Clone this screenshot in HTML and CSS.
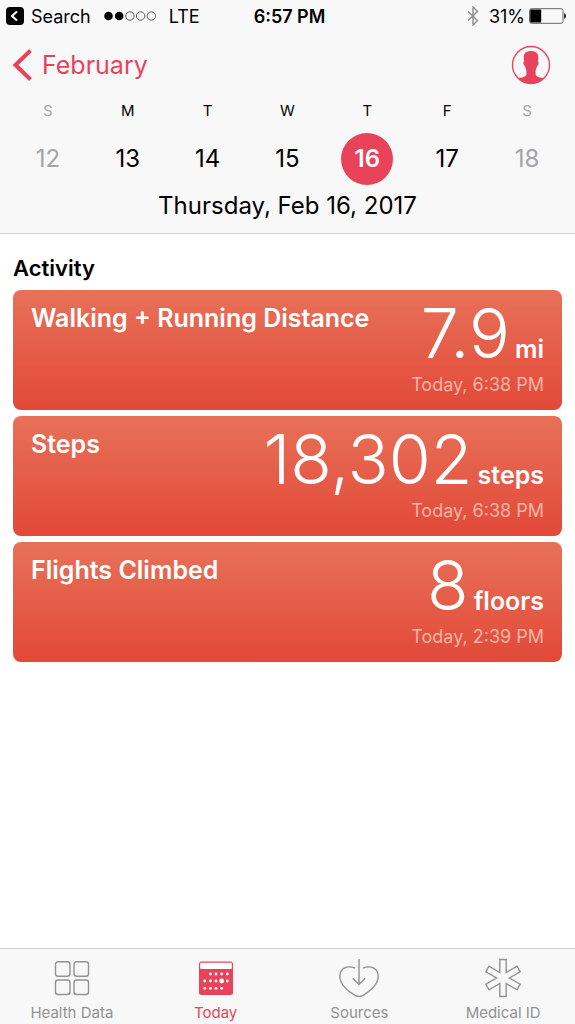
FILE: index.html
```html
<!DOCTYPE html>
<html lang="en">
<head>
    <meta charset="UTF-8">
    <meta name="viewport" content="width=device-width, initial-scale=1">
    <title>Health - Today</title>
    <link rel="stylesheet" href="styles.css">
</head>
<body>
    <header class="header">
        <div class="status-bar">
            <div class="status-left">
                <a href="#" class="back-app">
                    <svg width="18" height="18" viewBox="0 0 18 18" aria-hidden="true">
                        <rect width="18" height="18" rx="4" fill="#000"/>
                        <path d="M11 4.5L6 9l5 4.5" fill="none" stroke="#fff" stroke-width="2"/>
                    </svg>
                    Search
                </a>
                <svg class="signal" width="52" height="10" viewBox="0 0 52 10" role="img" aria-label="Signal 2 of 5">
                    <circle cx="4.5" cy="5" r="4.3"/>
                    <circle cx="15.2" cy="5" r="4.3"/>
                    <g fill="none" stroke="#333" stroke-width="0.8">
                        <circle cx="25.9" cy="5" r="4.2"/>
                        <circle cx="36.6" cy="5" r="4.2"/>
                        <circle cx="47.3" cy="5" r="4.2"/>
                    </g>
                </svg>
                <span>LTE</span>
            </div>
            <div class="clock">6:57 PM</div>
            <div class="status-right">
                <svg width="12" height="20" viewBox="0 0 12 20" aria-hidden="true">
                    <path d="M1 5.5l9.5 9L6 19V1l4.5 4.5L1 14.5" fill="none" stroke="#8e8e8e" stroke-width="1.4"/>
                </svg>
                <span class="percent">31%</span>
                <svg width="38" height="16" viewBox="0 0 38 16" aria-hidden="true">
                    <rect x="0.5" y="0.7" width="33.5" height="14.6" rx="2" fill="none" stroke="#555" stroke-width="0.9"/>
                    <rect x="1.2" y="1.5" width="11" height="13" rx="1"/>
                    <path d="M35.2 5q3.6 3 0 6z"/>
                </svg>
            </div>
        </div>

        <div class="nav-bar">
            <a href="#" class="back">
                <svg width="20" height="32" viewBox="0 0 20 32" aria-hidden="true">
                    <path d="M18.5 1.5L3.5 16l15 14.5" fill="none" stroke="currentColor" stroke-width="4"/>
                </svg>
                February
            </a>
            <button class="profile" aria-label="Profile">
                <svg width="40" height="40" viewBox="0 0 40 40">
                    <circle cx="20" cy="20" r="18.5" fill="none" stroke="currentColor" stroke-width="1.4"/>
                    <path d="M20 6C15 6 12.3 8.5 12.8 13.5L13.1 16.5C11.8 16.3 12.3 20.5 14 21C14.4 23.5 15.2 24.5 15.4 25.5V29.5C14.8 32 11 32.4 6.8 33.5C14 40.5 26 40.5 33.2 33.5C29 32.4 25.2 32 24.6 29.5V25.5C24.8 24.5 25.6 23.5 26 21C27.7 20.5 28.2 16.3 26.9 16.5L27.2 13.5C27.7 8.5 25 6 20 6Z" fill="currentColor"/>
                </svg>
            </button>
        </div>

        <div class="week">
            <button class="day weekend"><span class="letter">S</span><span class="number">12</span></button>
            <button class="day"><span class="letter">M</span><span class="number">13</span></button>
            <button class="day"><span class="letter">T</span><span class="number">14</span></button>
            <button class="day"><span class="letter">W</span><span class="number">15</span></button>
            <button class="day selected"><span class="letter">T</span><span class="number">16</span></button>
            <button class="day"><span class="letter">F</span><span class="number">17</span></button>
            <button class="day weekend"><span class="letter">S</span><span class="number">18</span></button>
        </div>
        <div class="date">Thursday, Feb 16, 2017</div>
    </header>

    <main class="content">
        <h1>Activity</h1>
        <a href="#" class="card">
            <h2>Walking + Running Distance</h2>
            <p class="value">7.9 <span class="unit">mi</span></p>
            <p class="time">Today, 6:38 PM</p>
        </a>
        <a href="#" class="card">
            <h2>Steps</h2>
            <p class="value">18,302 <span class="unit">steps</span></p>
            <p class="time">Today, 6:38 PM</p>
        </a>
        <a href="#" class="card">
            <h2>Flights Climbed</h2>
            <p class="value">8 <span class="unit">floors</span></p>
            <p class="time">Today, 2:39 PM</p>
        </a>
    </main>

    <nav class="tab-bar">
        <a href="#" class="tab">
            <svg width="40" height="40" viewBox="0 0 40 40" fill="none" stroke="currentColor" stroke-width="1.4" aria-hidden="true">
                <rect x="3.5" y="3.7" width="14.5" height="14.5" rx="2.5"/>
                <rect x="22" y="3.7" width="14.5" height="14.5" rx="2.5"/>
                <rect x="3.5" y="22" width="14.5" height="14.5" rx="2.5"/>
                <rect x="22" y="22" width="14.5" height="14.5" rx="2.5"/>
            </svg>
            Health Data
        </a>
        <a href="#" class="tab active">
            <svg width="40" height="40" viewBox="0 0 40 40" aria-hidden="true">
                <rect x="3" y="3.5" width="34" height="33.5" rx="2.5" fill="currentColor"/>
                <rect x="4.2" y="4.7" width="31.6" height="6.3" rx="1" fill="#fff"/>
                <g fill="#fff">
                    <circle cx="14.5" cy="16" r="1.4"/>
                    <circle cx="20" cy="16" r="1.4"/>
                    <circle cx="25.7" cy="16" r="1.4"/>
                    <circle cx="31.3" cy="16" r="1.4"/>
                    <circle cx="8.8" cy="23" r="1.4"/>
                    <circle cx="14.5" cy="23" r="1.4"/>
                    <circle cx="20" cy="23" r="1.4"/>
                    <circle cx="25.7" cy="23" r="2.4"/>
                    <circle cx="31.3" cy="23" r="1.4"/>
                    <circle cx="8.8" cy="30.3" r="1.4"/>
                    <circle cx="14.5" cy="30.3" r="1.4"/>
                    <circle cx="20" cy="30.3" r="1.4"/>
                    <circle cx="25.7" cy="30.3" r="1.4"/>
                </g>
            </svg>
            Today
        </a>
        <a href="#" class="tab">
            <svg width="40" height="40" viewBox="0 0 40 40" fill="none" stroke="currentColor" stroke-width="1.4" aria-hidden="true">
                <path d="M16 10.2C9 7 .8 10 .8 18.5C.8 27 10 34 16 37.3Q20 39.5 24 37.3C30 34 39.2 27 39.2 18.5C39.2 10 31 7 24 10.2"/>
                <path d="M20 1v25.5M13.8 20.2L20 26.500l6.2-6.3"/>
            </svg>
            Sources
        </a>
        <a href="#" class="tab">
            <svg width="40" height="40" viewBox="0 0 40 40" fill="none" stroke="currentColor" stroke-width="1.4" aria-hidden="true">
                <path d="M16.8 1.5H23.2V14.5L34 8.2L37.2 13.8L26.4 20L37.2 26.2L34 31.8L23.2 25.5V38.5H16.8V25.5L6 31.8L2.8 26.2L13.6 20L2.8 13.8L6 8.2L16.8 14.5Z"/>
            </svg>
            Medical ID
        </a>
    </nav>
</body>
</html>
```
FILE: styles.css
```css
* {
    box-sizing: border-box;
}
body {
    margin: 0;
    min-height: 100vh;
    display: flex;
    flex-direction: column;
    font-family: Inter, "Liberation Sans", sans-serif;
    background: #fff;
    color: #000;
}
a {
    color: inherit;
    text-decoration: none;
}
button {
    padding: 0;
    border: none;
    background: none;
    font: inherit;
    color: inherit;
    cursor: pointer;
}
h1, h2, p {
    margin: 0;
}
svg {
    display: block;
    flex: none;
}

/* Header */
.header {
    background: #f8f8f9;
    border-bottom: 1px solid #cfcfd1;
}
.status-bar {
    display: grid;
    grid-template-columns: 1fr auto 1fr;
    align-items: center;
    height: 32px;
    padding: 0 8px;
    font-size: 18px;
}
.status-left, .status-right, .back-app {
    display: flex;
    align-items: center;
}
.status-left {
    margin-left: -2px;
}
.back-app {
    gap: 7px;
}
.signal {
    margin: 0 13px;
}
.clock {
    padding-left: 4px;
    font-weight: 600;
}
.status-right {
    justify-content: flex-end;
}
.percent {
    margin: 0 4px 0 10px;
}
.nav-bar {
    display: flex;
    justify-content: space-between;
    align-items: center;
    height: 66px;
    padding: 0 24px 0 12px;
    color: #e8435a;
}
.back {
    display: flex;
    align-items: center;
    gap: 10px;
    font-size: 25px;
}

/* Week strip */
.week {
    display: grid;
    grid-template-columns: repeat(7, 1fr);
    padding: 0 8px;
}
.day {
    display: flex;
    flex-direction: column;
    align-items: center;
    gap: 9px;
}
.letter {
    font-size: 15px;
    line-height: 26px;
}
.number {
    width: 52px;
    border-radius: 50%;
    font-size: 24px;
    line-height: 52px;
}
.weekend {
    color: #a5a5a7;
}
.selected .number {
    background: #e8435a;
    color: #fff;
    font-weight: 600;
}
.date {
    padding: 5px 0 11px;
    font-size: 24px;
    line-height: 32px;
    text-align: center;
}

/* Activity cards */
.content {
    flex: 1;
    display: flex;
    flex-direction: column;
    gap: 6px;
    padding: 18px 13px;
}
h1 {
    font-size: 22px;
    font-weight: 600;
    line-height: 32px;
}
.card {
    display: grid;
    grid-template-columns: auto 1fr;
    align-content: start;
    min-height: 120px;
    padding: 12px 18px 8px;
    border-radius: 8px;
    background: linear-gradient(#e87159, #e24938);
    color: #fff;
}
.card h2 {
    font-size: 25px;
    font-weight: 600;
    line-height: 32px;
}
.value {
    display: flex;
    justify-content: flex-end;
    align-items: baseline;
    gap: 5px;
    font-size: 68px;
    font-weight: 300;
    line-height: 62px;
    white-space: nowrap;
}
.unit {
    font-size: 25px;
    font-weight: 600;
    line-height: 32px;
}
.time {
    grid-column: 1 / -1;
    padding-top: 4px;
    font-size: 18px;
    line-height: 32px;
    text-align: right;
    color: #f9b5a5;
}

/* Tab bar */
.tab-bar {
    display: grid;
    grid-template-columns: repeat(4, 1fr);
    padding: 9px 0 0;
    background: #f8f8f9;
    border-top: 1px solid #cfcfd1;
}
.tab {
    display: flex;
    flex-direction: column;
    align-items: center;
    gap: 4px;
    font-size: 15px;
    line-height: 22px;
    color: #929292;
}
.active {
    color: #e8435a;
}
```
